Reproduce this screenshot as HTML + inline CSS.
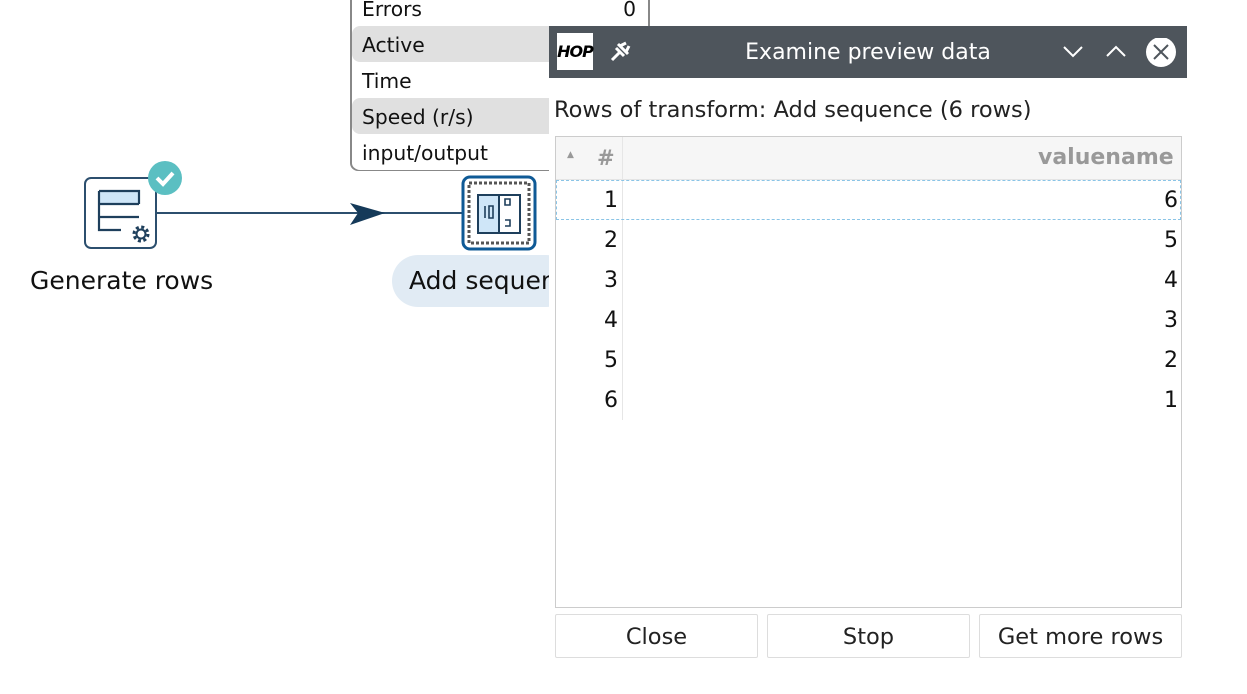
<!DOCTYPE html>
<html><head><meta charset="utf-8"><style>
*{margin:0;padding:0;box-sizing:border-box}
body{width:1247px;height:694px;background:#fff;position:relative;overflow:hidden;font-family:"DejaVu Sans","Liberation Sans",sans-serif;color:#111}
.abs{position:absolute}
.mrow{position:absolute;left:352px;width:296px;height:36px;font-size:20.3px;line-height:38px;padding-left:10px;border-radius:8px}
.g{background:#e0e0e0}
.w{background:#fff}
.cell{position:absolute;font-size:22px;line-height:42px;text-align:right}
.btn{position:absolute;top:614px;height:44px;border:1px solid #ddd;border-radius:2px;background:#fff;font-size:22.5px;line-height:44px;text-align:center;color:#222}
</style></head><body>
<div class="abs" style="left:350px;top:-10px;width:300px;height:181px;border:2px solid #888;border-top:none;border-radius:0 0 8px 8px;background:#fff"></div>
<div class="mrow w" style="top:-10px">Errors<span style="position:absolute;right:12px">0</span></div>
<div class="mrow g" style="top:26px">Active</div>
<div class="mrow w" style="top:62px">Time</div>
<div class="mrow g" style="top:98px">Speed (r/s)</div>
<div class="mrow w" style="top:134px">input/output</div>

<svg class="abs" style="left:0;top:0" width="560" height="320">
 <line x1="157" y1="213" x2="462" y2="213" stroke="#2c4f6e" stroke-width="2"/>
 <polygon points="350,203 385,213 350,225 358,213" fill="#153a59"/>
 <rect x="85" y="178" width="71" height="70" rx="6" fill="#fff" stroke="#2c4f6e" stroke-width="2"/>
 <rect x="99" y="191" width="40" height="13" fill="#cfe6f8"/>
 <path d="M99 191h40v13 M99 204h40 M99 217h40 M99 191v39h22" fill="none" stroke="#1e3f5c" stroke-width="2.2"/>
 <circle cx="141" cy="234" r="7" fill="none" stroke="#1e3f5c" stroke-width="3" stroke-dasharray="3 2.5"/>
 <circle cx="141" cy="234" r="4.5" fill="none" stroke="#1e3f5c" stroke-width="2"/>
 <circle cx="165" cy="178" r="17" fill="#5bbfc2"/>
 <path d="M157 178l6 6 10-11" fill="none" stroke="#fff" stroke-width="4"/>
 <rect x="463" y="177" width="72" height="72" rx="7" fill="#fff" stroke="#0f5a96" stroke-width="3"/>
 <rect x="469" y="183" width="60" height="60" fill="none" stroke="#555" stroke-width="3" stroke-dasharray="3 2"/>
 <rect x="478" y="195" width="42" height="38" fill="#cfe6f8" stroke="#1e3f5c" stroke-width="2"/>
 <rect x="499" y="195" width="21" height="38" fill="#fff" stroke="#1e3f5c" stroke-width="2"/>
 <path d="M485 206v12 M489 206h4v12h-4z M505 199h5v6h-5z M505 220h5v6h-5" fill="none" stroke="#1e3f5c" stroke-width="1.6"/>
 <rect x="392" y="255" width="180" height="52" rx="26" fill="#e1ebf4"/>
 <text x="409" y="289" font-size="25" font-family="DejaVu Sans,sans-serif" fill="#111">Add sequence</text>
 <text x="30" y="289" font-size="25" font-family="DejaVu Sans,sans-serif" fill="#111">Generate rows</text>
</svg>

<div class="abs" style="left:549px;top:26px;width:638px;height:668px;background:#fff"></div>
<div class="abs" style="left:549px;top:26px;width:638px;height:52px;background:#4e555c"></div>
<div class="abs" style="left:557px;top:33px;width:36px;height:37px;background:#fff;font:italic bold 16px 'DejaVu Sans',sans-serif;line-height:37px;text-align:center;color:#000;letter-spacing:-1px">HOP</div>
<svg class="abs" style="left:606px;top:38px" width="28" height="28"><path d="M6 22l7-7 M10 10l8 8 M12 6l10 10 M14 8l6-3 M20 14l3-6" stroke="#fff" stroke-width="3" fill="none"/></svg>
<div class="abs" style="left:549px;top:26px;width:638px;height:52px;line-height:54px;text-align:center;color:#fff;font-size:22px">Examine preview data</div>
<svg class="abs" style="left:1060px;top:38px" width="120" height="30">
 <path d="M4 9l9 9 9-9" fill="none" stroke="#fff" stroke-width="2"/>
 <path d="M47 18l9-9 9 9" fill="none" stroke="#fff" stroke-width="2"/>
 <circle cx="101" cy="14" r="15" fill="#fff"/>
 <path d="M94 7l14 14M108 7l-14 14" stroke="#4e555c" stroke-width="2"/>
</svg>
<div class="abs" style="left:554px;top:97px;font-size:22.5px;color:#222">Rows of transform: Add sequence (6 rows)</div>
<div class="abs" style="left:555px;top:136px;width:627px;height:472px;border:1px solid #ccc"></div>
<div class="abs" style="left:556px;top:137px;width:625px;height:43px;background:#f6f6f6;border-bottom:1px solid #e4e4e4"></div>
<div class="abs" style="left:622px;top:137px;width:1px;height:283px;background:#e6e6e6"></div>
<div class="abs" style="left:567px;top:150px;font-size:9px;color:#999">▲</div>
<div class="abs" style="left:597px;top:146px;font-size:21px;font-weight:bold;color:#999">#</div>
<div class="abs" style="left:1038px;top:145px;font-size:22px;font-weight:bold;color:#999">valuename</div>
<div class="abs" style="left:556px;top:180px;width:625px;height:40px;border:1px dashed #8ac4e6"></div>
<div class="cell" style="left:560px;width:58px;top:180px">1</div><div class="cell" style="left:630px;width:548px;top:180px">6</div>
<div class="cell" style="left:560px;width:58px;top:220px">2</div><div class="cell" style="left:630px;width:548px;top:220px">5</div>
<div class="cell" style="left:560px;width:58px;top:260px">3</div><div class="cell" style="left:630px;width:548px;top:260px">4</div>
<div class="cell" style="left:560px;width:58px;top:300px">4</div><div class="cell" style="left:630px;width:548px;top:300px">3</div>
<div class="cell" style="left:560px;width:58px;top:340px">5</div><div class="cell" style="left:630px;width:548px;top:340px">2</div>
<div class="cell" style="left:560px;width:58px;top:380px">6</div><div class="cell" style="left:630px;width:548px;top:380px">1</div>
<div class="btn" style="left:555px;width:203px">Close</div>
<div class="btn" style="left:767px;width:203px">Stop</div>
<div class="btn" style="left:979px;width:203px">Get more rows</div>
</body></html>
